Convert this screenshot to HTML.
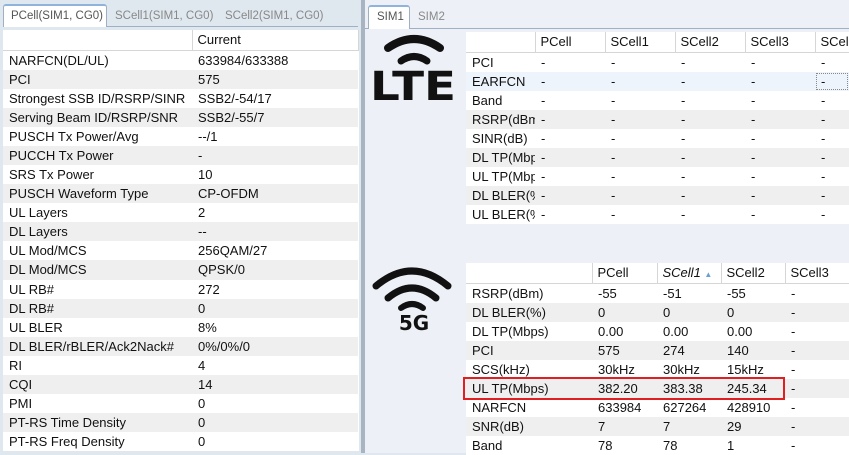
<!DOCTYPE html>
<html><head><style>
*{margin:0;padding:0;box-sizing:border-box}
body{width:849px;height:453px;overflow:hidden;background:#dfe7ef;font-family:"Liberation Sans",Arial,sans-serif;font-size:13px;color:#111;position:relative}
.abs{position:absolute}
table{border-collapse:collapse;position:absolute;background:#fff;table-layout:fixed}
td{height:19.1px;padding:0 0 0 6px;white-space:nowrap;overflow:hidden;line-height:19px}
tr.g td{background:#efefef}
th{font-weight:normal;text-align:left;padding-left:5px;height:20px;border-right:1px solid #d6d6d6;border-bottom:1px solid #d6d6d6;background:#fff}
.tab{position:absolute;font-size:11.5px;color:#888;line-height:20px;white-space:nowrap}
</style></head><body>
<div class="abs" style="left:0;top:0;width:361px;height:453px;background:#dfe7ef"></div>
<div class="abs" style="left:3px;top:26px;width:355px;height:1px;background:#9fb0c4"></div>
<div class="tab" style="left:3px;top:4px;width:104px;height:23px;background:#fff;border:1px solid #9fb0c4;border-bottom:none;border-top:2px solid #8fb3dd;border-radius:3px 3px 0 0;padding-left:7px;color:#555">PCell(SIM1, CG0)</div>
<div class="tab" style="left:115px;top:6px">SCell1(SIM1, CG0)</div>
<div class="tab" style="left:225px;top:6px">SCell2(SIM1, CG0)</div>
<table style="left:3px;top:30px;width:355px">
<colgroup><col style="width:189px"><col style="width:166px"></colgroup>
<tr><th></th><th>Current</th></tr>
<tr><td>NARFCN(DL/UL)</td><td>633984/633388</td></tr>
<tr class="g"><td>PCI</td><td>575</td></tr>
<tr><td>Strongest SSB ID/RSRP/SINR</td><td>SSB2/-54/17</td></tr>
<tr class="g"><td>Serving Beam ID/RSRP/SNR</td><td>SSB2/-55/7</td></tr>
<tr><td>PUSCH Tx Power/Avg</td><td>--/1</td></tr>
<tr class="g"><td>PUCCH Tx Power</td><td>-</td></tr>
<tr><td>SRS Tx Power</td><td>10</td></tr>
<tr class="g"><td>PUSCH Waveform Type</td><td>CP-OFDM</td></tr>
<tr><td>UL Layers</td><td>2</td></tr>
<tr class="g"><td>DL Layers</td><td>--</td></tr>
<tr><td>UL Mod/MCS</td><td>256QAM/27</td></tr>
<tr class="g"><td>DL Mod/MCS</td><td>QPSK/0</td></tr>
<tr><td>UL RB#</td><td>272</td></tr>
<tr class="g"><td>DL RB#</td><td>0</td></tr>
<tr><td>UL BLER</td><td>8%</td></tr>
<tr class="g"><td>DL BLER/rBLER/Ack2Nack#</td><td>0%/0%/0</td></tr>
<tr><td>RI</td><td>4</td></tr>
<tr class="g"><td>CQI</td><td>14</td></tr>
<tr><td>PMI</td><td>0</td></tr>
<tr class="g"><td>PT-RS Time Density</td><td>0</td></tr>
<tr><td>PT-RS Freq Density</td><td>0</td></tr>
</table>
<div class="abs" style="left:361px;top:0;width:4px;height:453px;background:#a9b4c2"></div>
<div class="abs" style="left:365px;top:0;width:484px;height:453px;background:#edf1f7"></div>
<div class="abs" style="left:365px;top:28px;width:484px;height:1px;background:#9fb0c4"></div>
<div class="tab" style="left:368px;top:5px;width:42px;height:24px;background:#fff;border:1px solid #9fb0c4;border-bottom:none;border-top:2px solid #8fb3dd;border-radius:3px 3px 0 0;padding-left:8px;color:#555">SIM1</div>
<div class="tab" style="left:418px;top:7px">SIM2</div>
<svg class="abs" style="left:368px;top:30px" width="92" height="75" viewBox="0 0 92 75">
<path d="M20 18 Q46 0 72 18" stroke="#111" stroke-width="8" fill="none" stroke-linecap="round"/>
<path d="M33 31 Q46 22 59 31" stroke="#111" stroke-width="7" fill="none" stroke-linecap="round"/>
<text x="2" y="70" font-family="DejaVu Sans" font-weight="bold" font-size="40" fill="#111" textLength="86" lengthAdjust="spacingAndGlyphs">LTE</text>
</svg>
<table style="left:466px;top:32px;width:383px;font-size:13px">
<colgroup><col style="width:69px"><col style="width:70px"><col style="width:70px"><col style="width:70px"><col style="width:70px"><col style="width:34px"></colgroup>
<tr><th></th><th>PCell</th><th>SCell1</th><th>SCell2</th><th>SCell3</th><th>SCell</th></tr>
<tr><td>PCI</td><td>-</td><td>-</td><td>-</td><td>-</td><td>-</td></tr>
<tr><td style="background:#eef4fb">EARFCN</td><td style="background:#eef4fb">-</td><td style="background:#eef4fb">-</td><td style="background:#eef4fb">-</td><td style="background:#eef4fb">-</td><td style="background:#eef4fb;outline:1px dotted #888;outline-offset:-2px">-</td></tr>
<tr><td>Band</td><td>-</td><td>-</td><td>-</td><td>-</td><td>-</td></tr>
<tr class="g"><td>RSRP(dBm</td><td>-</td><td>-</td><td>-</td><td>-</td><td>-</td></tr>
<tr><td>SINR(dB)</td><td>-</td><td>-</td><td>-</td><td>-</td><td>-</td></tr>
<tr class="g"><td>DL TP(Mbp</td><td>-</td><td>-</td><td>-</td><td>-</td><td>-</td></tr>
<tr><td>UL TP(Mbp</td><td>-</td><td>-</td><td>-</td><td>-</td><td>-</td></tr>
<tr class="g"><td>DL BLER(%</td><td>-</td><td>-</td><td>-</td><td>-</td><td>-</td></tr>
<tr><td>UL BLER(%</td><td>-</td><td>-</td><td>-</td><td>-</td><td>-</td></tr>
</table>
<svg class="abs" style="left:368px;top:262px" width="92" height="72" viewBox="0 0 92 72">
<path d="M8 24 Q44 -6 80 24" stroke="#111" stroke-width="7" fill="none" stroke-linecap="round"/>
<path d="M20 36 Q44 16 68 36" stroke="#111" stroke-width="7" fill="none" stroke-linecap="round"/>
<path d="M33 46 Q44 38 55 46" stroke="#111" stroke-width="6" fill="none" stroke-linecap="round"/>
<text x="46" y="68" text-anchor="middle" font-family="DejaVu Sans" font-weight="bold" font-size="20" fill="#111">5G</text>
</svg>
<table style="left:466px;top:263px;width:383px">
<colgroup><col style="width:126px"><col style="width:65px"><col style="width:64px"><col style="width:64px"><col style="width:64px"></colgroup>
<tr><th></th><th>PCell</th><th><i>SCell1</i> <span style="color:#6a9fd4;font-size:8px">&#9650;</span></th><th>SCell2</th><th>SCell3</th></tr>
<tr><td>RSRP(dBm)</td><td>-55</td><td>-51</td><td>-55</td><td>-</td></tr>
<tr class="g"><td>DL BLER(%)</td><td>0</td><td>0</td><td>0</td><td>-</td></tr>
<tr><td>DL TP(Mbps)</td><td>0.00</td><td>0.00</td><td>0.00</td><td>-</td></tr>
<tr class="g"><td>PCI</td><td>575</td><td>274</td><td>140</td><td>-</td></tr>
<tr><td>SCS(kHz)</td><td>30kHz</td><td>30kHz</td><td>15kHz</td><td>-</td></tr>
<tr class="g"><td>UL TP(Mbps)</td><td>382.20</td><td>383.38</td><td>245.34</td><td>-</td></tr>
<tr><td>NARFCN</td><td>633984</td><td>627264</td><td>428910</td><td>-</td></tr>
<tr class="g"><td>SNR(dB)</td><td>7</td><td>7</td><td>29</td><td>-</td></tr>
<tr><td>Band</td><td>78</td><td>78</td><td>1</td><td>-</td></tr>
</table>
<div class="abs" style="left:463px;top:377px;width:322px;height:23px;border:2px solid #e02020"></div>
</body></html>
